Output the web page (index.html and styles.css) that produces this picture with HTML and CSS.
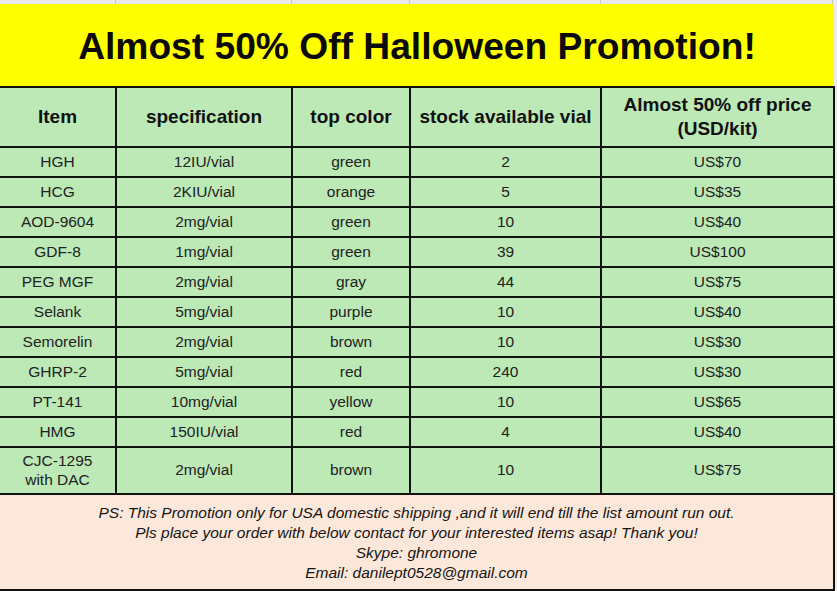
FILE: index.html
```html
<!DOCTYPE html>
<html>
<head>
<meta charset="utf-8">
<link rel="stylesheet" href="styles.css">
</head>
<body>
<div class="sheet">
  <div class="strip">
    <span></span><span></span><span></span><span></span><span></span>
  </div>
  <div class="title">Almost 50% Off Halloween Promotion!</div>
  <div class="grid">
    <div class="cell head">Item</div>
    <div class="cell head">specification</div>
    <div class="cell head">top color</div>
    <div class="cell head">stock available vial</div>
    <div class="cell head">Almost 50% off price<br>(USD/kit)</div>

    <div class="cell">HGH</div><div class="cell">12IU/vial</div><div class="cell">green</div><div class="cell">2</div><div class="cell">US$70</div>
    <div class="cell">HCG</div><div class="cell">2KIU/vial</div><div class="cell">orange</div><div class="cell">5</div><div class="cell">US$35</div>
    <div class="cell">AOD-9604</div><div class="cell">2mg/vial</div><div class="cell">green</div><div class="cell">10</div><div class="cell">US$40</div>
    <div class="cell">GDF-8</div><div class="cell">1mg/vial</div><div class="cell">green</div><div class="cell">39</div><div class="cell">US$100</div>
    <div class="cell">PEG MGF</div><div class="cell">2mg/vial</div><div class="cell">gray</div><div class="cell">44</div><div class="cell">US$75</div>
    <div class="cell">Selank</div><div class="cell">5mg/vial</div><div class="cell">purple</div><div class="cell">10</div><div class="cell">US$40</div>
    <div class="cell">Semorelin</div><div class="cell">2mg/vial</div><div class="cell">brown</div><div class="cell">10</div><div class="cell">US$30</div>
    <div class="cell">GHRP-2</div><div class="cell">5mg/vial</div><div class="cell">red</div><div class="cell">240</div><div class="cell">US$30</div>
    <div class="cell">PT-141</div><div class="cell">10mg/vial</div><div class="cell">yellow</div><div class="cell">10</div><div class="cell">US$65</div>
    <div class="cell">HMG</div><div class="cell">150IU/vial</div><div class="cell">red</div><div class="cell">4</div><div class="cell">US$40</div>
    <div class="cell tall">CJC-1295<br>with DAC</div><div class="cell tall">2mg/vial</div><div class="cell tall">brown</div><div class="cell tall">10</div><div class="cell tall">US$75</div>

    <div class="note">
      PS: This Promotion only for USA domestic shipping ,and it will end till the list amount run out.<br>
      Pls place your order with below contact for your interested items asap! Thank you!<br>
      Skype: ghromone<br>
      Email: danilept0528@gmail.com
    </div>
  </div>
</div>
</body>
</html>
```
FILE: styles.css
```css
html, body {
  margin: 0;
  padding: 0;
  background: #ececec;
}
body {
  font-family: "Liberation Sans", Arial, sans-serif;
  width: 837px;
  height: 591px;
  overflow: hidden;
}
.sheet {
  width: 835px;
}
.strip {
  height: 4px;
  display: grid;
  grid-template-columns: 116px 176px 118px 191px 232px;
  background: #eaeaea;
}
.strip span {
  border-right: 1px solid #c8c8c8;
}
.title {
  width: 834px;
  height: 82px;
  box-sizing: border-box;
  padding-top: 3px;
  background: #ffff00;
  display: flex;
  align-items: center;
  justify-content: center;
  font-weight: bold;
  font-size: 37.2px;
  color: #0a0a0a;
}
.grid {
  display: grid;
  grid-template-columns: 115px 174px 116px 189px 231px;
  grid-template-rows: 58px repeat(10, 28px) 45px 94px;
  gap: 2px;
  background: #111;
  border-top: 2px solid #111;
  border-right: 2px solid #111;
  border-bottom: 2px solid #111;
  width: 833px;
}
.cell {
  background: #bde9b7;
  display: flex;
  align-items: center;
  justify-content: center;
  text-align: center;
  font-size: 15.5px;
  color: #222;
  line-height: 19px;
  padding-bottom: 2px;
  box-sizing: border-box;
}
.head {
  font-weight: bold;
  font-size: 19px;
  color: #111;
  line-height: 24px;
  padding-bottom: 0;
}
.tall {
  line-height: 19px;
}
.note {
  grid-column: 1 / -1;
  background: #fce8da;
  font-style: italic;
  font-size: 15.5px;
  line-height: 20px;
  color: #151515;
  text-align: center;
  padding-top: 8px;
  box-sizing: border-box;
}
```
